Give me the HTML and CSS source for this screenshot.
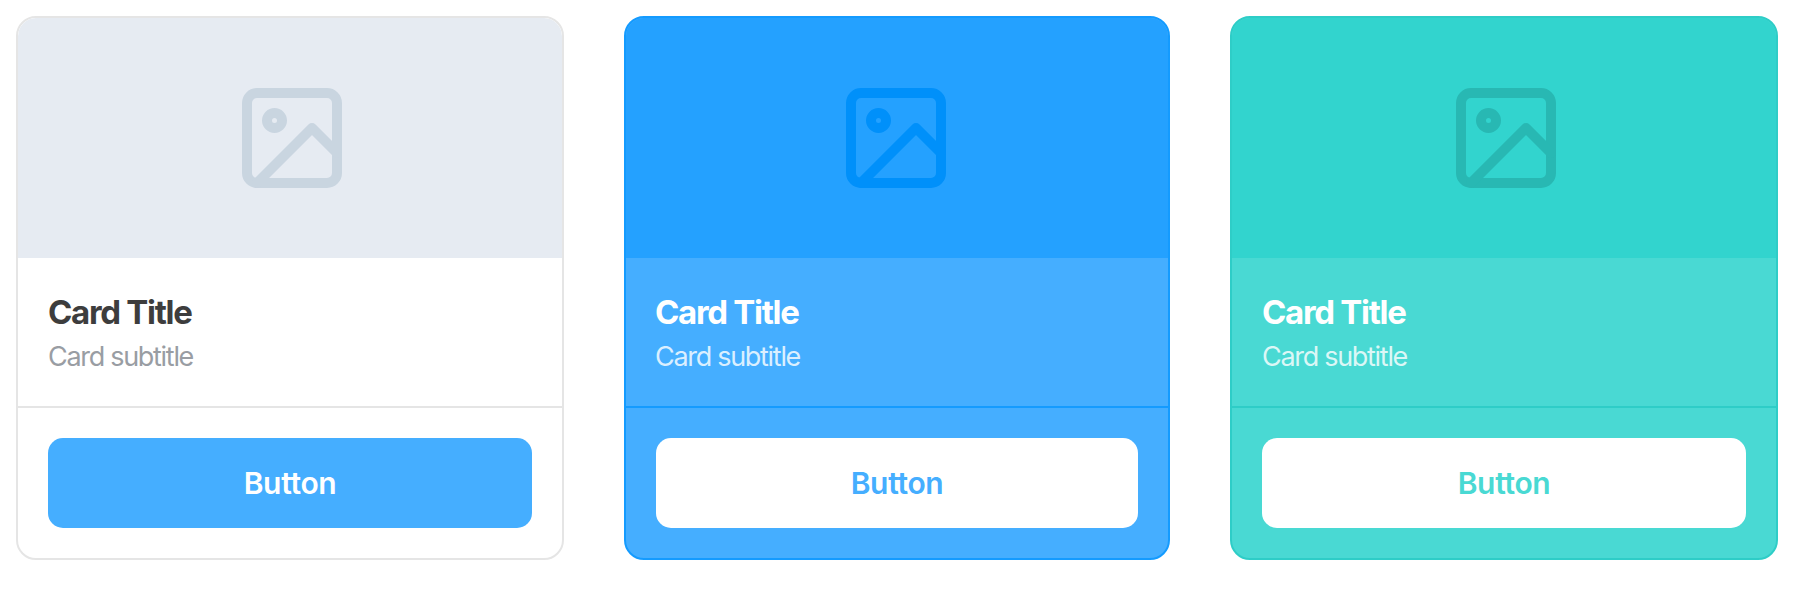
FILE: index.html
```html
<!DOCTYPE html>
<html lang="en">
<head>
<meta charset="utf-8">
<title>Cards</title>
<link rel="stylesheet" href="styles.css">
</head>
<body>
<main class="cards">
  <article class="card card-light">
    <div class="card-image"><svg class="icon" viewBox="0 0 24 24"><rect x="3" y="3" width="18" height="18" rx="2"/><circle cx="8.5" cy="8.5" r="1.5"/><path d="M21 15l-5-5L5 21"/></svg></div>
    <div class="card-header"><h2 class="card-title">Card Title</h2><p class="card-subtitle">Card subtitle</p></div>
    <div class="card-footer"><button class="button">Button</button></div>
  </article>
  <article class="card card-blue">
    <div class="card-image"><svg class="icon" viewBox="0 0 24 24"><rect x="3" y="3" width="18" height="18" rx="2"/><circle cx="8.5" cy="8.5" r="1.5"/><path d="M21 15l-5-5L5 21"/></svg></div>
    <div class="card-header"><h2 class="card-title">Card Title</h2><p class="card-subtitle">Card subtitle</p></div>
    <div class="card-footer"><button class="button">Button</button></div>
  </article>
  <article class="card card-teal">
    <div class="card-image"><svg class="icon" viewBox="0 0 24 24"><rect x="3" y="3" width="18" height="18" rx="2"/><circle cx="8.5" cy="8.5" r="1.5"/><path d="M21 15l-5-5L5 21"/></svg></div>
    <div class="card-header"><h2 class="card-title">Card Title</h2><p class="card-subtitle">Card subtitle</p></div>
    <div class="card-footer"><button class="button">Button</button></div>
  </article>
</main>
</body>
</html>
```
FILE: styles.css
```css
* { box-sizing: border-box; }
body { margin: 0; background: #fff; font-family: Inter, sans-serif; }
.cards { display: grid; grid-template-columns: 548px 546px 548px; column-gap: 60px; padding: 16px; }
.card { height: 544px; border: 2px solid var(--line); border-radius: 20px; background: var(--surface); overflow: hidden; display: flex; flex-direction: column; }
.card-light { --line: #e5e5e5; --surface: #fff; --image: #e6ebf2; --icon: #c9d5e0; --title: #3d3d3d; --subtitle: #999da3; --button: #45aeff; --label: #fff; }
.card-blue { --line: #149bff; --surface: #45aeff; --image: #24a1ff; --icon: #0090fa; --title: #fff; --subtitle: #daefff; --button: #fff; --label: #45aeff; }
.card-teal { --line: #2ecdc7; --surface: #49d9d3; --image: #32d4ce; --icon: #28b8b3; --title: #fff; --subtitle: #dbf7f6; --button: #fff; --label: #49d9d3; }
.card-image { height: 240px; padding-left: 4px; background: var(--image); display: flex; align-items: center; justify-content: center; border-radius: 18px 18px 0 0; }
.card-blue .card-image { padding: 0 2px 0 0; }
.icon { width: 120px; height: 120px; fill: none; stroke: var(--icon); stroke-width: 2; stroke-linecap: round; stroke-linejoin: round; }
.card-header { height: 150px; padding: 33px 30px 0; border-bottom: 2px solid var(--line); }
.card-blue .card-header { padding-left: 29px; }
.card-title { margin: 0; font-size: 33px; line-height: 42px; font-weight: 700; letter-spacing: -1.3px; color: var(--title); }
.card-subtitle { margin: 3px 0 0; font-size: 27px; line-height: 42px; font-weight: 400; letter-spacing: -1.3px; color: var(--subtitle); }
.card-footer { padding: 30px; }
.button { display: block; width: 100%; height: 90px; padding: 0; border: 0; border-radius: 15px; background: var(--button); color: var(--label); font: 600 30px Inter, sans-serif; letter-spacing: -0.35px; }
```
